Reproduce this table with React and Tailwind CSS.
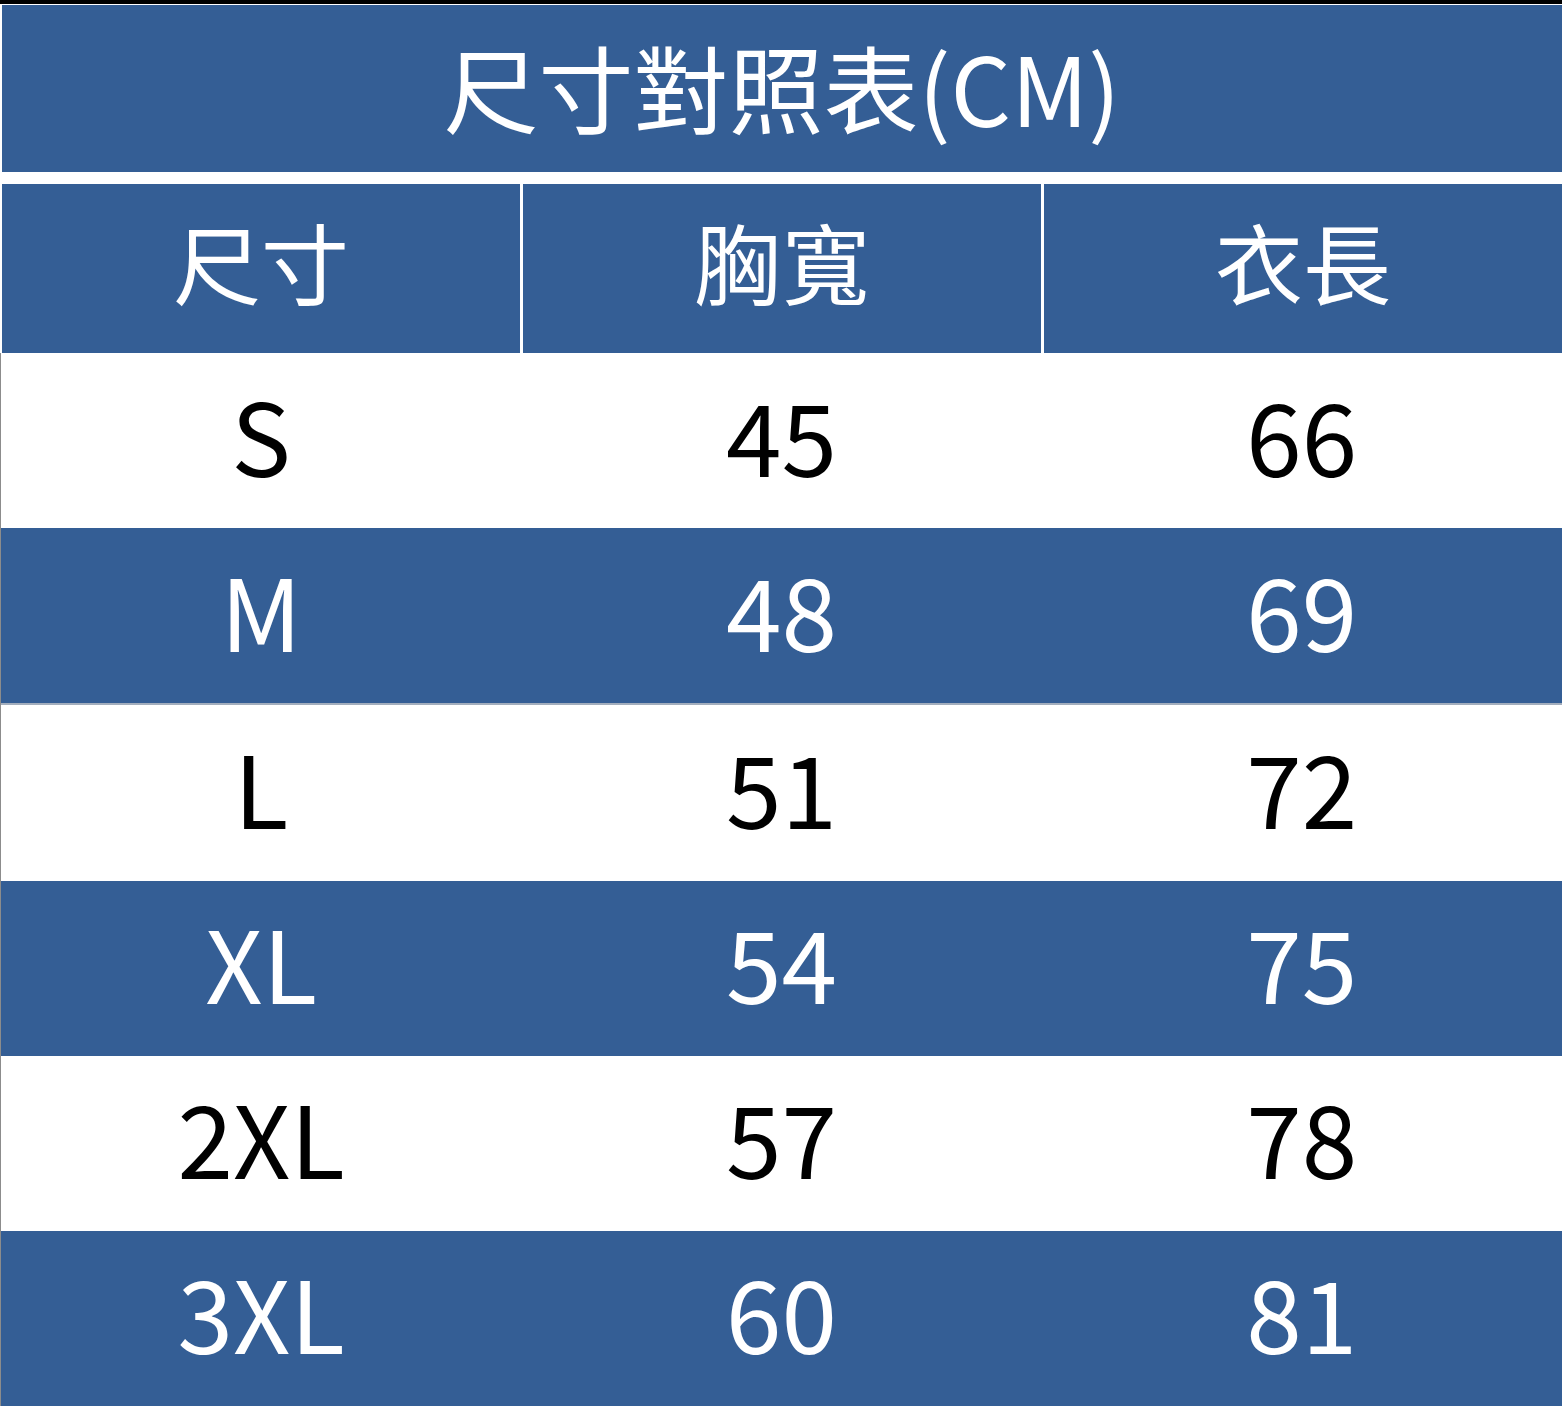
const rows = [
  { size: 'S', chest: '45', length: '66' },
  { size: 'M', chest: '48', length: '69' },
  { size: 'L', chest: '51', length: '72' },
  { size: 'XL', chest: '54', length: '75' },
  { size: '2XL', chest: '57', length: '78' },
  { size: '3XL', chest: '60', length: '81' },
];

const headers = ['尺寸', '胸寬', '衣長'];

const font = { fontFamily: '"Noto Sans CJK TC", "Noto Sans", sans-serif' };

export default function App() {
  return (
    <div className="w-[1562px] h-[1406px] bg-white flex flex-col overflow-hidden" style={font}>
      {/* top strip */}
      <div className="h-[4px] bg-black shrink-0" />

      {/* title */}
      <div className="ml-[2px] mt-[1px] h-[167px] shrink-0 bg-[#345e95] flex items-center justify-center">
        <h1 className="text-white text-[95px] leading-none pb-[6px]">尺寸對照表(CM)</h1>
      </div>

      {/* column headers */}
      <div className="ml-[2px] mt-[12px] h-[169px] shrink-0 grid grid-cols-3 gap-[3px] bg-white">
        {headers.map((h) => (
          <div key={h} className="bg-[#345e95] flex items-center justify-center">
            <span className="text-white text-[88px] leading-none pb-[18px]">{h}</span>
          </div>
        ))}
      </div>

      {/* body */}
      <div className="flex-1 flex flex-col border-l border-[#8c8c8c]">
        {rows.map((r, i) => {
          const blue = i % 2 === 1;
          return (
            <div
              key={r.size}
              className={`flex-1 grid grid-cols-3 ${blue ? 'bg-[#345e95] text-white' : 'bg-white text-black'} ${r.size === 'M' ? 'border-b-2 border-[#a3aebd]' : ''}`}
            >
              {[r.size, r.chest, r.length].map((v, j) => (
                <div key={j} className="flex items-center justify-center">
                  <span className="text-[100px] leading-none pb-[14px]">{v}</span>
                </div>
              ))}
            </div>
          );
        })}
      </div>
    </div>
  );
}
